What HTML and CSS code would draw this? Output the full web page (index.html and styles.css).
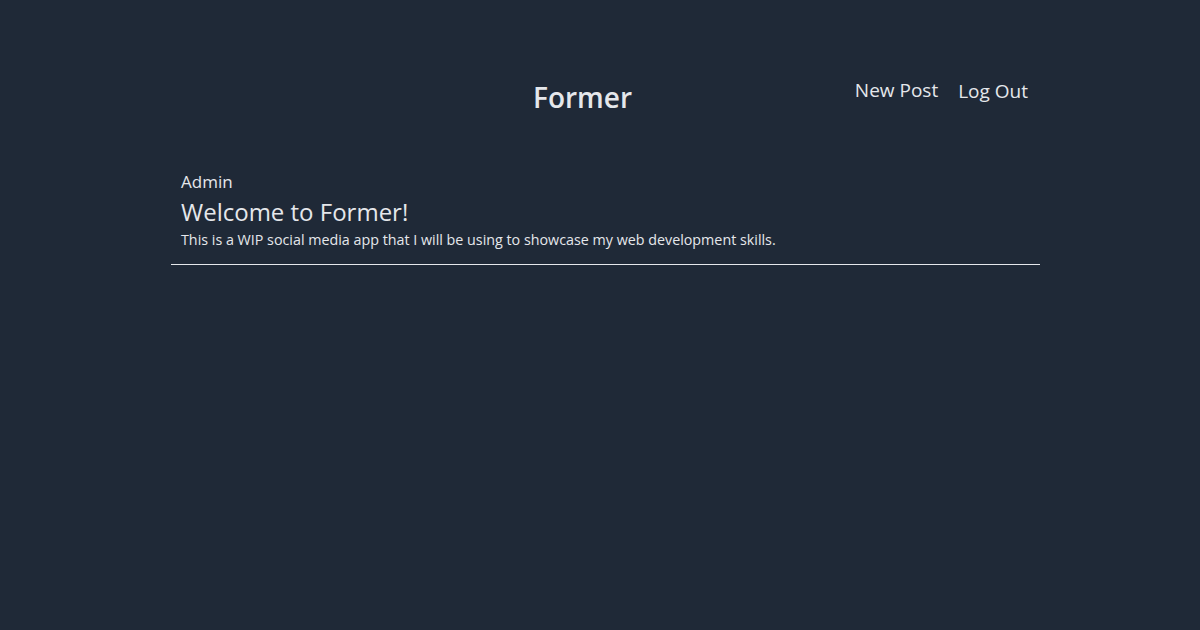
FILE: index.html
```html
<!DOCTYPE html>
<html lang="en">
<head>
<meta charset="utf-8">
<title>Former</title>
<link rel="stylesheet" href="styles.css">
</head>
<body>
<div class="page">
  <header class="header">
    <h1 class="brand">Former</h1>
    <nav class="nav">
      <a class="nav-link" href="#">New Post</a>
      <button class="nav-link nav-button" type="button">Log Out</button>
    </nav>
  </header>
  <main class="feed">
    <article class="post">
      <div class="post-author">Admin</div>
      <h2 class="post-title">Welcome to Former!</h2>
      <p class="post-body">This is a WIP social media app that I will be using to showcase my web development skills.</p>
    </article>
  </main>
</div>
</body>
</html>
```

FILE: styles.css
```css
html, body {
  margin: 0;
  padding: 0;
  height: 100%;
}
body {
  background: #1f2937;
  color: #e5e7eb;
  font-family: "Open Sans", "Noto Sans", sans-serif;
}
.page {
  width: 869px;
  margin: 0 auto 0 171px;
  padding-top: 76px;
}
.header {
  display: flex;
  align-items: flex-start;
}
.brand {
  margin: 3px 0 0 362px;
  font-size: 28px;
  line-height: 36px;
  font-weight: 600;
}
.nav {
  margin-left: auto;
  margin-right: 2px;
  display: flex;
  align-items: flex-start;
}
.nav-link {
  display: block;
  padding: 0 10px;
  font-size: 19px;
  line-height: 28px;
  color: #e5e7eb;
  text-decoration: none;
}
.nav-button {
  margin-top: 1px;
  background: none;
  border: 0;
  font-family: inherit;
  cursor: pointer;
}
.feed {
  margin-top: 53px;
}
.post {
  padding: 0 10px 14px;
  border-bottom: 1px solid #e5e7eb;
}
.post-author {
  font-size: 17px;
  line-height: 28px;
}
.post-title {
  margin: 0;
  font-size: 24px;
  line-height: 32px;
  font-weight: 400;
}
.post-body {
  margin: 2px 0 0;
  font-size: 14.3px;
  line-height: 20px;
}
```
